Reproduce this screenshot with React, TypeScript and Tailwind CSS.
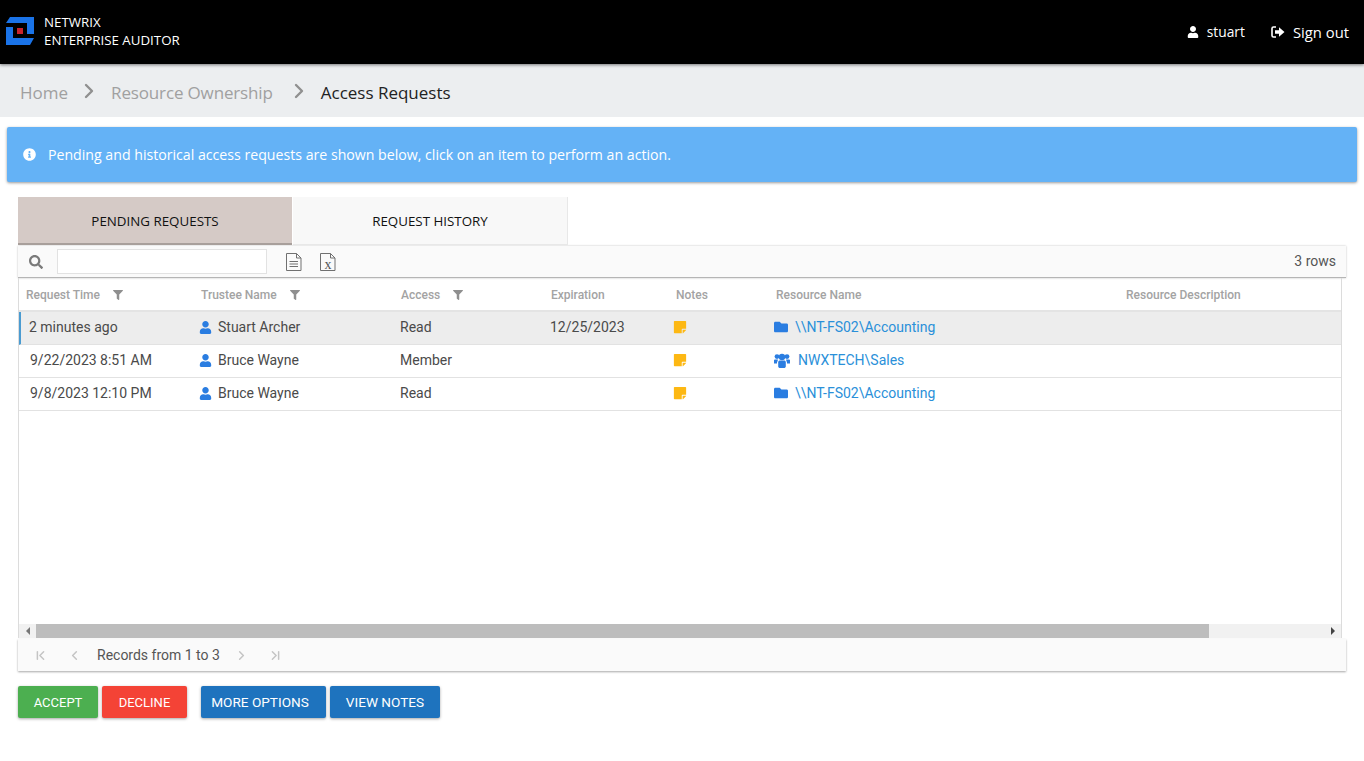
import { ChevronFirst, ChevronLast, ChevronLeft, ChevronRight } from 'lucide-react';
import { FaFilter, FaFolder, FaInfoCircle, FaSearch, FaStickyNote, FaUser } from 'react-icons/fa';

const rows = [
  { time: '2 minutes ago', trustee: 'Stuart Archer', access: 'Read', expiration: '12/25/2023', resource: '\\\\NT-FS02\\Accounting', group: false, selected: true },
  { time: '9/22/2023 8:51 AM', trustee: 'Bruce Wayne', access: 'Member', expiration: '', resource: 'NWXTECH\\Sales', group: true, selected: false },
  { time: '9/8/2023 12:10 PM', trustee: 'Bruce Wayne', access: 'Read', expiration: '', resource: '\\\\NT-FS02\\Accounting', group: false, selected: false },
];

function Logo() {
  return (
    <svg width="28" height="28" viewBox="0 0 28 28" className="ml-[6px] -mt-[2px] shrink-0">
      <path d="M4 0H28V17H21V6H0Z" fill="#1a73e8" />
      <path d="M0 10H7V21H28L24 28H0Z" fill="#1a73e8" />
      <rect x="11" y="11" width="6" height="6" fill="#c8232c" />
    </svg>
  );
}

function SignOutIcon() {
  return (
    <svg width="14" height="12" viewBox="0 0 14 12" className="text-white">
      <path d="M5 1H2.5A1.5 1.5 0 0 0 1 2.5v7A1.5 1.5 0 0 0 2.5 11H5" fill="none" stroke="currentColor" strokeWidth="1.6" />
      <path d="M4 4.2H8V1.2L13.5 6 8 10.8V7.8H4Z" fill="currentColor" />
    </svg>
  );
}

function UsersIcon() {
  return (
    <svg width="16" height="15" viewBox="0 0 16 15" className="shrink-0" fill="#2a7de1">
      <circle cx="3" cy="3.6" r="2.4" />
      <circle cx="13" cy="3.6" r="2.4" />
      <circle cx="8" cy="4" r="3.2" />
      <path d="M0 7.2C0 6.6.6 6.4 1.2 6.4H4C3.8 7.6 3.4 8.4 3 9.6V10.6H0Z" />
      <path d="M16 7.2C16 6.6 15.4 6.4 14.8 6.4H12C12.2 7.6 12.6 8.4 13 9.6V10.6H16Z" />
      <path d="M4.2 9.4C4.2 8.2 5 7.6 6 7.6H10C11 7.6 11.8 8.2 11.8 9.4V13.2C11.8 14.2 11 15 10 15H6C5 15 4.2 14.2 4.2 13.2Z" />
    </svg>
  );
}

function DocIcon({ excel }: { excel?: boolean }) {
  return (
    <svg width="16" height="18" viewBox="0 0 16 18" fill="none" stroke="#707070" strokeWidth="1">
      <path d="M.5.5H10.5L15 5V17.5H.5Z" />
      <path d="M10.5.5V5H15" />
      {excel ? (
        <text x="8" y="15.5" textAnchor="middle" fontSize="14" fontFamily="'Liberation Serif', serif" fill="#555" stroke="none">
          x
        </text>
      ) : (
        <path d="M3.5 8.5H12M3.5 11H12M3.5 13.5H12" />
      )}
    </svg>
  );
}

function Th({ className, label, filter }: { className: string; label: string; filter?: boolean }) {
  return (
    <div className={`${className} flex items-center pt-[2px] text-[12px] font-medium text-[#a3a3a3]`}>
      <span>{label}</span>
      {filter && <FaFilter size={10} className="ml-[13px] text-[#8f8f8f]" />}
    </div>
  );
}

export default function App() {
  return (
    <div className="h-[761px] overflow-hidden bg-white font-['Roboto',sans-serif]">
      <header className="relative z-10 flex h-[64px] items-center justify-between bg-black shadow-[0_1px_3px_rgba(0,0,0,0.5)]">
        <div className="flex items-center">
          <Logo />
          <div className="ml-[10px] -mt-[3px] font-['Open_Sans',sans-serif] text-[13.3px] leading-[18px] text-white">
            <div>NETWRIX</div>
            <div>ENTERPRISE AUDITOR</div>
          </div>
        </div>
        <div className="mr-[15px] flex items-center font-['Open_Sans',sans-serif] text-white">
          <FaUser size={12} />
          <span className="ml-2 pt-[1px] text-[13.8px]">stuart</span>
          <span className="ml-[26px] flex items-center">
            <SignOutIcon />
            <span className="ml-2 text-[14.8px]">Sign out</span>
          </span>
        </div>
      </header>

      <nav className="flex h-[53px] items-center bg-[#eceef0] pl-5 pt-[5px] font-['Open_Sans',sans-serif] text-[17px]">
        <span className="text-[#a0a0a0]">Home</span>
        <ChevronRight size={24} strokeWidth={2.4} className="ml-[9px] -mt-[5px] text-[#909090]" />
        <span className="ml-[10px] tracking-[-0.15px] text-[#a0a0a0]">Resource Ownership</span>
        <ChevronRight size={24} strokeWidth={2.4} className="ml-[14px] -mt-[5px] text-[#909090]" />
        <span className="ml-[10px] text-[#222]">Access Requests</span>
      </nav>

      <div className="mx-[7px] mt-[10px] flex h-[55px] items-center rounded-[2px] bg-[#64b2f6] pl-4 font-['Open_Sans',sans-serif] text-[14.15px] text-white shadow-[0_1px_3px_rgba(0,0,0,0.4)]">
        <FaInfoCircle size={13} />
        <span className="ml-[12px]">Pending and historical access requests are shown below, click on an item to perform an action.</span>
      </div>

      <div className="mx-[18px] mt-[15px] w-[1328px]">
        <div className="flex h-[48px] font-['Open_Sans',sans-serif] text-[13.35px] text-[#111]">
          <div className="flex w-[274px] items-center justify-center border-b-2 border-[#a89f9b] bg-[#d5cac6] pt-[2px]">PENDING REQUESTS</div>
          <div className="ml-px flex w-[275px] items-center justify-center border-b border-r border-[#e8e8e8] bg-[#f8f8f8] pt-[2px]">REQUEST HISTORY</div>
        </div>

        <div className="mt-px flex h-[32px] items-center border-b border-[#b5b5b5] bg-[#fafafa] shadow-[0_0_2px_rgba(0,0,0,0.25)]">
          <FaSearch size={14} className="ml-[11px] text-[#7a7a7a]" />
          <div className="ml-[14px] h-[25px] w-[210px] border border-[#e2e2e2] bg-white" />
          <span className="ml-[19px] flex"><DocIcon /></span>
          <span className="ml-[18px] flex"><DocIcon excel /></span>
          <span className="ml-auto mr-[10px] text-[14px] text-[#555]">3 rows</span>
        </div>

        <div className="mr-[4px] flex h-[360px] flex-col border-x border-[#dcdcdc]">
          <div className="flex h-[34px] shrink-0 border-b-2 border-[#e4e4e4]">
            <Th className="w-[174px] pl-[7px]" label="Request Time" filter />
            <Th className="w-[200px] pl-2" label="Trustee Name" filter />
            <Th className="w-[150px] pl-2" label="Access" filter />
            <Th className="w-[125px] pl-2" label="Expiration" />
            <Th className="w-[100px] pl-2" label="Notes" />
            <Th className="w-[350px] pl-2" label="Resource Name" />
            <Th className="flex-1 pl-2" label="Resource Description" />
          </div>

          <div className="flex-1 text-[14px] text-[#4a4a4a]">
            {rows.map((row) => (
              <div
                key={row.time}
                className={`flex h-[33px] items-center border-b border-[#e2e2e2] pb-[2px] ${row.selected ? 'border-l-2 border-l-[#4a9bd1] bg-[#ededed]' : ''}`}
              >
                <div className={`${row.selected ? 'w-[172px] pl-[8px]' : 'w-[174px] pl-[11px]'}`}>{row.time}</div>
                <div className="flex w-[200px] items-center pl-[6px]">
                  <FaUser size={13} className="text-[#2a7de1]" />
                  <span className="ml-[6px]">{row.trustee}</span>
                </div>
                <div className="w-[150px] pl-[7px]">{row.access}</div>
                <div className="w-[125px] pl-[7px]">{row.expiration}</div>
                <div className="w-[100px] pl-[5px]">
                  <FaStickyNote size={14} className="text-[#fdb813]" />
                </div>
                <div className="flex w-[350px] items-center pl-[6px] text-[#2a90d9]">
                  {row.group ? <UsersIcon /> : <FaFolder size={14} className="text-[#2a7de1]" />}
                  <span className={row.group ? 'ml-[8px]' : 'ml-[7px]'}>{row.resource}</span>
                </div>
              </div>
            ))}
          </div>

          <div className="flex h-[14px] shrink-0 items-center bg-[#f1f1f1]">
            <div className="flex w-[17px] justify-center">
              <span className="h-0 w-0 border-y-[4px] border-r-[4px] border-y-transparent border-r-[#777]" />
            </div>
            <div className="h-full w-[1173px] bg-[#bdbdbd]" />
            <div className="ml-auto flex w-[17px] justify-center">
              <span className="h-0 w-0 border-y-[4px] border-l-[4px] border-y-transparent border-l-[#444]" />
            </div>
          </div>
        </div>

        <div className="mt-px flex h-[32px] items-center bg-[#fafafa] text-[14px] text-[#555] shadow-[0_1px_2px_rgba(0,0,0,0.35)]">
          <ChevronFirst size={15} strokeWidth={2.4} className="ml-[15px] text-[#c4c4c4]" />
          <ChevronLeft size={15} strokeWidth={2.4} className="ml-[19px] text-[#c4c4c4]" />
          <span className="ml-[15px] pt-[1px]">Records from 1 to 3</span>
          <ChevronRight size={15} strokeWidth={2.4} className="ml-[14px] text-[#c4c4c4]" />
          <ChevronLast size={15} strokeWidth={2.4} className="ml-[19px] text-[#c4c4c4]" />
        </div>

        <div className="mt-[15px] flex text-[13px] text-white">
          <button className="h-[32px] w-[80px] rounded-[2px] bg-[#4caf50] pt-[1px] shadow-[0_1px_3px_rgba(0,0,0,0.35)]">ACCEPT</button>
          <button className="ml-1 h-[32px] w-[85px] rounded-[2px] bg-[#f44336] pt-[1px] shadow-[0_1px_3px_rgba(0,0,0,0.35)]">DECLINE</button>
          <button className="ml-[14px] h-[32px] w-[125px] rounded-[2px] bg-[#1e73be] pr-[7px] text-[13.6px] shadow-[0_1px_3px_rgba(0,0,0,0.35)]">MORE OPTIONS</button>
          <button className="ml-1 h-[32px] w-[110px] rounded-[2px] bg-[#1e73be] text-[13.6px] shadow-[0_1px_3px_rgba(0,0,0,0.35)]">VIEW NOTES</button>
        </div>
      </div>
    </div>
  );
}
